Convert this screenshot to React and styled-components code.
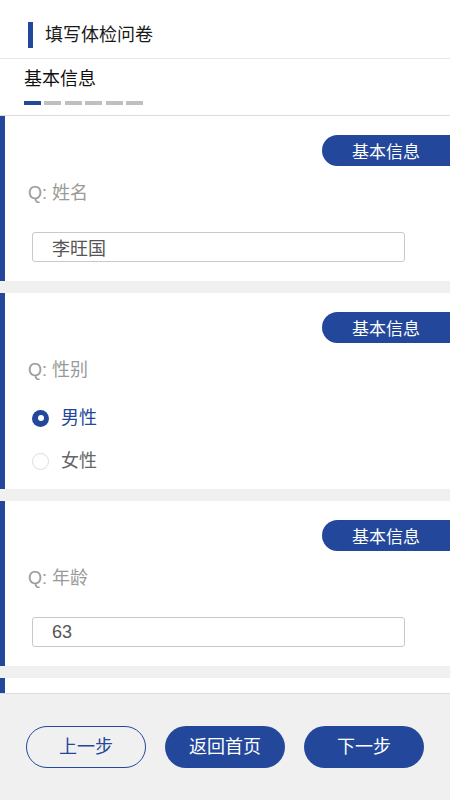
import React from "react";
import styled, { createGlobalStyle, css } from "styled-components";

const BLUE = "#23489b";

const GlobalStyle = createGlobalStyle`
  html, body {
    margin: 0;
    padding: 0;
    background: #ffffff;
  }
  body {
    font-family: "Liberation Sans", "Noto Sans CJK SC", sans-serif;
  }
  * { box-sizing: border-box; }
`;

const Page = styled.div`
  width: 450px;
  height: 800px;
  display: flex;
  flex-direction: column;
  overflow: hidden;
  background: #ffffff;
`;

const Header = styled.header`
  height: 59px;
  flex: none;
  display: flex;
  align-items: center;
  padding: 12px 0 0 28px;
  border-bottom: 1px solid #e6e6e6;
`;

const TitleBar = styled.span`
  width: 5px;
  height: 26px;
  background: ${BLUE};
`;

const Title = styled.h1`
  margin: 0 0 0 12px;
  font-size: 18px;
  font-weight: normal;
  line-height: 24px;
  color: #1a1a1a;
`;

const TabSection = styled.div`
  flex: none;
  padding: 8px 0 10px 24px;
  border-bottom: 1px solid #dcdcdc;
`;

const TabLabel = styled.div`
  font-size: 18px;
  line-height: 24px;
  color: #111111;
`;

const Dashes = styled.div`
  display: flex;
  gap: 3.4px;
  margin-top: 10px;
`;

const Dash = styled.span`
  width: 17px;
  height: 4px;
  background: ${(p) => (p.$active ? BLUE : "#bfbfbf")};
`;

const Content = styled.main`
  flex: 1;
  min-height: 0;
  overflow: hidden;
  background: #f0f0f0;
  display: flex;
  flex-direction: column;
  gap: 12px;
`;

const Card = styled.section`
  flex: none;
  background: #ffffff;
  border-left: 5px solid ${BLUE};
  padding: 19px 0 19px;
  min-height: ${(p) => (p.$placeholder ? "160px" : "0")};
`;

const BadgeRow = styled.div`
  display: flex;
  justify-content: flex-end;
`;

const Badge = styled.span`
  width: 128px;
  height: 31px;
  border-radius: 15.5px 0 0 15.5px;
  background: ${BLUE};
  color: #ffffff;
  font-size: 17px;
  display: flex;
  align-items: center;
  justify-content: center;
`;

const Question = styled.div`
  margin: 15px 0 0 23px;
  font-size: 18px;
  line-height: 24px;
  color: #9a9a9a;
`;

const TextInput = styled.input`
  display: block;
  width: 373px;
  height: 30px;
  margin: 27px 0 0 27px;
  padding: 0 0 0 19px;
  border: 1px solid #c9c9c9;
  border-radius: 3px;
  background: #ffffff;
  font-family: "Liberation Sans", "Noto Sans CJK SC", sans-serif;
  font-size: 18px;
  color: #555555;
  outline: none;
`;

const Options = styled.div`
  display: flex;
  flex-direction: column;
  gap: 19px;
  margin: 24px 0 -3px 27px;
`;

const Option = styled.label`
  display: flex;
  align-items: center;
  gap: 12px;
  font-size: 18px;
  line-height: 24px;
  color: ${(p) => (p.$checked ? BLUE : "#666666")};
`;

const RadioDot = styled.span`
  position: relative;
  width: 17px;
  height: 17px;
  border-radius: 50%;
  flex: none;
  ${(p) =>
    p.$checked
      ? css`
          background: ${BLUE};
          &::after {
            content: "";
            position: absolute;
            left: 50%;
            top: 50%;
            width: 6px;
            height: 6px;
            margin: -3px 0 0 -3px;
            border-radius: 50%;
            background: #ffffff;
          }
        `
      : css`
          border: 1px solid #dcdce2;
          background: #ffffff;
        `}
`;

const Footer = styled.footer`
  height: 107px;
  flex: none;
  border-top: 1px solid #dcdcdc;
  background: #f0f0f0;
  display: flex;
  justify-content: center;
  align-items: flex-start;
  gap: 19px;
  padding-top: 32px;
`;

const Button = styled.button`
  width: 120px;
  height: 42px;
  padding: 0;
  border-radius: 21px;
  font-family: "Liberation Sans", "Noto Sans CJK SC", sans-serif;
  font-size: 18px;
  line-height: 24px;
  cursor: pointer;
  ${(p) =>
    p.$outline
      ? css`
          background: transparent;
          border: 1px solid ${BLUE};
          color: ${BLUE};
        `
      : css`
          background: ${BLUE};
          border: none;
          color: #ffffff;
        `}
`;

const questions = [
  { type: "text", label: "姓名", value: "李旺国" },
  { type: "radio", label: "性别", options: ["男性", "女性"], value: "男性" },
  { type: "text", label: "年龄", value: "63" },
];

function QuestionCard({ q }) {
  return (
    <Card>
      <BadgeRow>
        <Badge>基本信息</Badge>
      </BadgeRow>
      <Question>Q: {q.label}</Question>
      {q.type === "text" ? (
        <TextInput defaultValue={q.value} readOnly />
      ) : (
        <Options>
          {q.options.map((o) => (
            <Option key={o} $checked={o === q.value}>
              <RadioDot $checked={o === q.value} />
              {o}
            </Option>
          ))}
        </Options>
      )}
    </Card>
  );
}

export default function App() {
  return (
    <>
      <GlobalStyle />
      <Page>
        <Header>
          <TitleBar />
          <Title>填写体检问卷</Title>
        </Header>
        <TabSection>
          <TabLabel>基本信息</TabLabel>
          <Dashes>
            {[0, 1, 2, 3, 4, 5].map((i) => (
              <Dash key={i} $active={i === 0} />
            ))}
          </Dashes>
        </TabSection>
        <Content>
          {questions.map((q) => (
            <QuestionCard key={q.label} q={q} />
          ))}
          <Card $placeholder aria-hidden="true" />
        </Content>
        <Footer>
          <Button $outline>上一步</Button>
          <Button>返回首页</Button>
          <Button>下一步</Button>
        </Footer>
      </Page>
    </>
  );
}
